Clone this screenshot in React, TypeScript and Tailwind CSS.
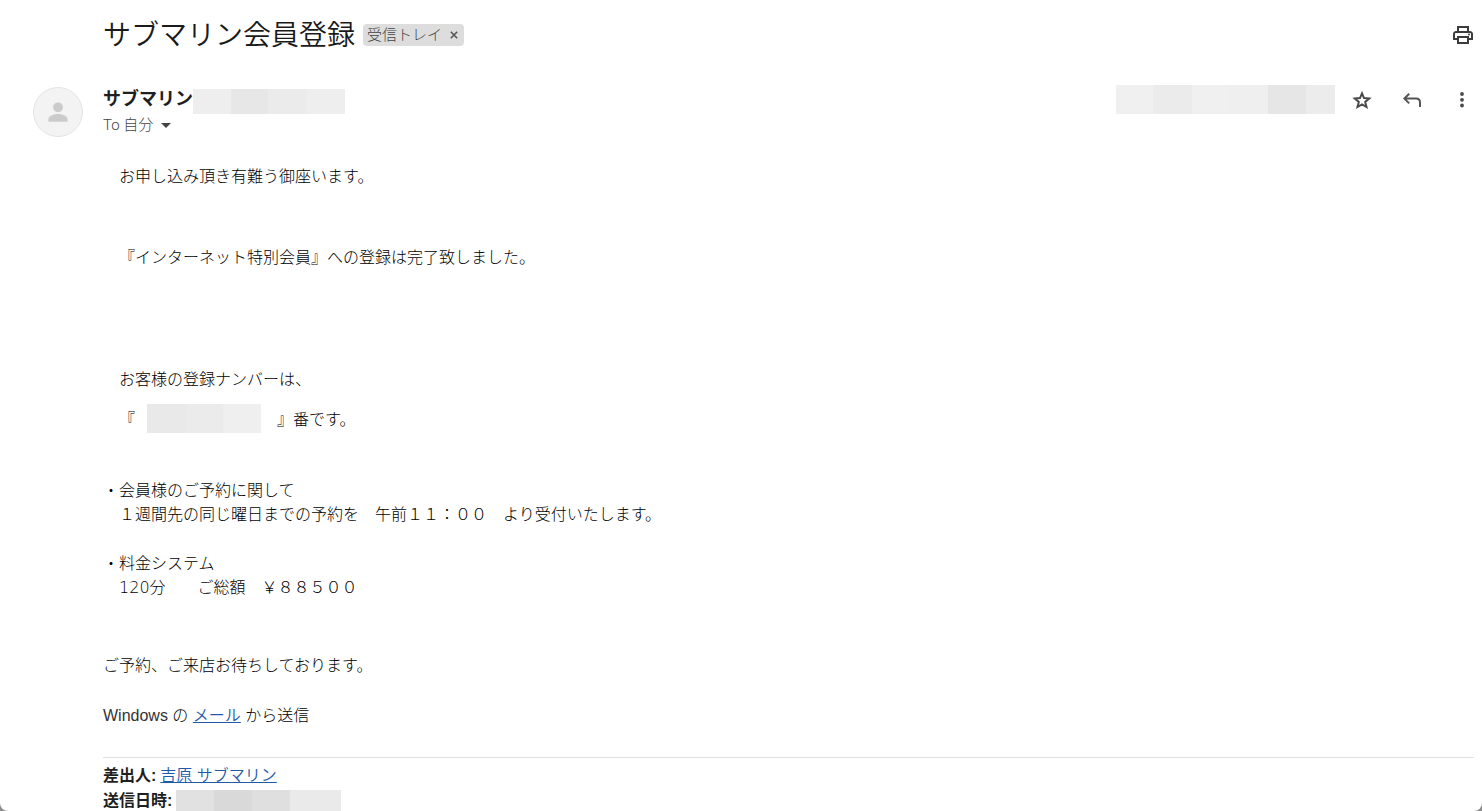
import { clsx } from "clsx";

interface Tile {
  width: string;
  color: string;
}

const SENDER_TILES: Tile[] = [
  { width: "w-[38px]", color: "bg-[#eeeeee]" },
  { width: "w-[37px]", color: "bg-[#e7e7e7]" },
  { width: "w-[38px]", color: "bg-[#ebebeb]" },
  { width: "w-[39px]", color: "bg-[#eeeeee]" },
];

const DATE_TILES: Tile[] = [
  { width: "w-[37px]", color: "bg-[#f0f0f0]" },
  { width: "w-[39px]", color: "bg-[#ebebeb]" },
  { width: "w-[37px]", color: "bg-[#f0f0f0]" },
  { width: "w-[39px]", color: "bg-[#efefef]" },
  { width: "w-[38px]", color: "bg-[#e6e6e6]" },
  { width: "w-[29px]", color: "bg-[#ececec]" },
];

const NUMBER_TILES: Tile[] = [
  { width: "w-[39px]", color: "bg-[#e9e9e9]" },
  { width: "w-[37px]", color: "bg-[#ebebeb]" },
  { width: "w-[38px]", color: "bg-[#efefef]" },
];

const SENT_TILES: Tile[] = [
  { width: "w-[38px]", color: "bg-[#e1e1e1]" },
  { width: "w-[38px]", color: "bg-[#d9d9d9]" },
  { width: "w-[38px]", color: "bg-[#dfdfdf]" },
  { width: "w-[51px]", color: "bg-[#eaeaea]" },
];

// Mosaic over private details
function Redacted({ tiles, className }: { tiles: Tile[]; className: string }) {
  return (
    <span className={clsx("flex shrink-0", className)} aria-hidden="true">
      {tiles.map((tile, i) => (
        <span key={i} className={clsx("h-full", tile.width, tile.color)} />
      ))}
    </span>
  );
}

function PrintIcon() {
  return (
    <svg viewBox="0 0 24 24" className="size-6" fill="#3c3c3c">
      <path d="M19 8h-1V3H6v5H5c-1.66 0-3 1.34-3 3v6h4v4h12v-4h4v-6c0-1.66-1.34-3-3-3zM8 5h8v3H8V5zm8 12v2H8v-4h8v2zm2-2v-2H6v2H4v-4c0-.55.45-1 1-1h14c.55 0 1 .45 1 1v4h-2z" />
      <circle cx="18" cy="11.5" r="1" />
    </svg>
  );
}

function StarIcon() {
  return (
    <svg viewBox="0 0 24 24" className="size-6" fill="none" stroke="#4a4a4a" strokeWidth="2">
      <path d="M12 5.3l2 4.8 5.2.4-4 3.4 1.3 5.1-4.5-2.7-4.5 2.7 1.3-5.1-4-3.4 5.2-.4z" />
    </svg>
  );
}

function ReplyIcon() {
  return (
    <svg viewBox="0 0 24 24" className="size-6" fill="none" stroke="#555555" strokeWidth="2">
      <path d="M9.2 5.8L4.4 10.6l4.8 4.8M4.6 10.6H16c2.6 0 4 1.6 4 4V19" />
    </svg>
  );
}

function MoreIcon() {
  return (
    <svg viewBox="0 0 24 24" className="size-6" fill="#4a4a4a">
      <circle cx="12" cy="6" r="1.9" />
      <circle cx="12" cy="11.8" r="1.9" />
      <circle cx="12" cy="17.5" r="1.9" />
    </svg>
  );
}

function Avatar() {
  return (
    <div className="flex size-[50px] shrink-0 items-center justify-center rounded-full border border-[#e4e4e4] bg-[#f3f3f3]">
      <svg viewBox="0 0 24 24" className="size-7" fill="#cbcbcb">
        <circle cx="12" cy="8" r="4.2" />
        <path d="M12 13.8c-2.9 0-8.2 1.4-8.2 4.2v2.4h16.4V18c0-2.8-5.3-4.2-8.2-4.2z" />
      </svg>
    </div>
  );
}

function SubjectBar() {
  return (
    <header className="flex items-center pt-3 pr-[7px] pl-[103px]">
      <h1 className="pt-0.5 text-[28px] leading-11 font-[350] text-[#1a1a1a]">サブマリン会員登録</h1>
      <span className="ml-2 flex h-[22px] items-center rounded bg-[#dddddd] pr-1.5 pl-1 text-[15px] leading-5 font-light text-[#444444]">
        受信トレイ
        <button type="button" aria-label="ラベルを削除" className="ml-2">
          <svg viewBox="0 0 8 8" className="size-2" stroke="#555555" strokeWidth="1.6">
            <path d="M.8.8l6.4 6.4M7.2.8L.8 7.2" />
          </svg>
        </button>
      </span>
      <button type="button" aria-label="印刷" className="ml-auto">
        <PrintIcon />
      </button>
    </header>
  );
}

function SenderRow() {
  return (
    <div className="mt-[27px] flex items-start pl-[33px]">
      <div className="mt-0.5">
        <Avatar />
      </div>
      <div className="ml-5">
        <div className="flex h-7 items-center">
          <span className="text-lg leading-7 font-bold text-[#1f1f1f]">サブマリン</span>
          <Redacted tiles={SENDER_TILES} className="mt-1 h-[25px]" />
        </div>
        <button
          type="button"
          className="flex h-6 items-center font-['Roboto','Noto_Sans_CJK_JP',sans-serif] text-[15px] leading-6 font-light text-[#444444]"
        >
          To 自分
          <svg viewBox="0 0 10 5" className="ml-2 h-[5px] w-2.5" fill="#444444">
            <path d="M0 0h10L5 5z" />
          </svg>
        </button>
      </div>
      <div className="ml-auto flex items-center">
        <Redacted tiles={DATE_TILES} className="h-[29px]" />
        <div className="ml-[15px] flex items-center gap-[26px] pr-2">
          <button type="button" aria-label="スター">
            <StarIcon />
          </button>
          <button type="button" aria-label="返信">
            <ReplyIcon />
          </button>
          <button type="button" aria-label="その他">
            <MoreIcon />
          </button>
        </div>
      </div>
    </div>
  );
}

function MessageBody() {
  return (
    <article className="mt-7 mr-2 ml-[103px] text-base leading-6 font-light text-black [text-spacing-trim:space-all]">
      <p>　お申し込み頂き有難う御座います。</p>
      <p className="mt-[57px]">　『インターネット特別会員』への登録は完了致しました。</p>
      <p className="mt-[98px]">　お客様の登録ナンバーは、</p>
      <p className="mt-[13px] flex h-[29px] items-center">
        <span className="whitespace-pre">　『</span>
        <Redacted tiles={NUMBER_TILES} className="mb-0.5 ml-3 h-[29px]" />
        <span className="ml-4">』番です。</span>
      </p>
      <p className="mt-[45px]">・会員様のご予約に関して</p>
      <p>　１週間先の同じ曜日までの予約を　午前１１：００　より受付いたします。</p>
      <p className="mt-[25px]">・料金システム</p>
      <p>
        {"　"}
        <span className="font-['DejaVu_Sans_Light','DejaVu_Sans',sans-serif] font-extralight">120</span>
        {"分　　ご総額　￥８８５００"}
      </p>
      <p className="mt-[54px]">ご予約、ご来店お待ちしております。</p>
      <p className="mt-[26px]">
        <span className="text-[#333333]">Windows</span> の{" "}
        <a href="#mail" className="font-[350] text-[#1f5ba8] underline">
          メール
        </a>{" "}
        から送信
      </p>
      <hr className="mt-[29px] border-[#e0e0e0]" />
      <div className="mt-[5px] flex h-[26px] items-center gap-1">
        <b className="font-bold text-[#1f1f1f]">差出人:</b>
        <a href="#sender" className="font-[350] text-[#1f5ba8] underline">
          吉原 サブマリン
        </a>
      </div>
      <div className="flex h-6 items-center gap-1">
        <b className="font-bold text-[#1f1f1f]">送信日時:</b>
        <Redacted tiles={SENT_TILES} className="h-[22px]" />
      </div>
    </article>
  );
}

export default function App() {
  return (
    <div className="h-screen overflow-hidden bg-[#8c8c8c]">
      <main className="h-full overflow-hidden rounded-b-lg bg-white font-['Liberation_Sans','Noto_Sans_CJK_JP',sans-serif]">
        <SubjectBar />
        <SenderRow />
        <MessageBody />
      </main>
    </div>
  );
}
